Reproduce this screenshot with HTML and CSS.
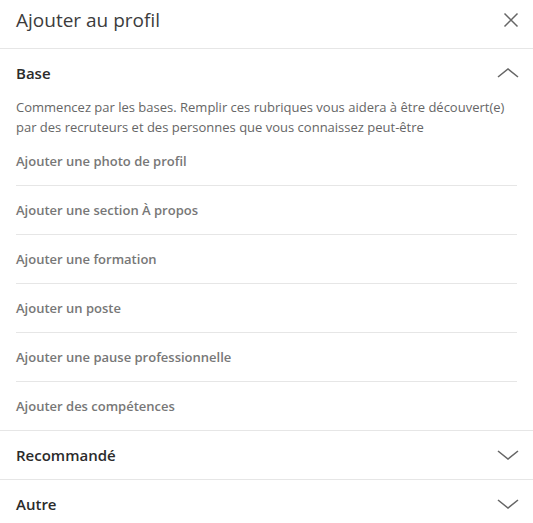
FILE: index.html
```html
<!DOCTYPE html>
<html lang="fr">
<head>
<meta charset="utf-8">
<link rel="stylesheet" href="styles.css">
</head>
<body>
<div class="modal">
  <header class="modal-header">
    <h2 class="modal-title">Ajouter au profil</h2>
    <button class="close" aria-label="Fermer">
      <svg width="16" height="16" viewBox="0 0 16 16"><path d="M1.5 1.5 L14.5 14.5 M14.5 1.5 L1.5 14.5" stroke="#666" stroke-width="1.5" fill="none"/></svg>
    </button>
  </header>

  <section class="section">
    <div class="section-head">
      <h3>Base</h3>
      <svg class="chev" width="24" height="24" viewBox="0 0 24 24"><path d="M3 16 L13 8 L23 16" stroke="#666" stroke-width="1.6" fill="none"/></svg>
    </div>
    <p class="desc">Commencez par les bases. Remplir ces rubriques vous aidera à être découvert(e) par des recruteurs et des personnes que vous connaissez peut-être</p>
    <ul class="items">
      <li>Ajouter une photo de profil</li>
      <li>Ajouter une section À propos</li>
      <li>Ajouter une formation</li>
      <li>Ajouter un poste</li>
      <li>Ajouter une pause professionnelle</li>
      <li>Ajouter des compétences</li>
    </ul>
  </section>

  <section class="section">
    <div class="section-head">
      <h3>Recommandé</h3>
      <svg class="chev" width="24" height="24" viewBox="0 0 24 24"><path d="M3 8 L13 16 L23 8" stroke="#666" stroke-width="1.6" fill="none"/></svg>
    </div>
  </section>

  <section class="section">
    <div class="section-head">
      <h3>Autre</h3>
      <svg class="chev" width="24" height="24" viewBox="0 0 24 24"><path d="M3 8 L13 16 L23 8" stroke="#666" stroke-width="1.6" fill="none"/></svg>
    </div>
  </section>
</div>
</body>
</html>
```

FILE: styles.css
```css
* { box-sizing: border-box; }
html, body { margin: 0; padding: 0; background: #fff; }
body {
  font-family: "Open Sans", "Noto Sans", Arial, sans-serif;
  color: #666;
}
.modal { width: 533px; }
.modal-header {
  height: 49px;
  display: flex;
  align-items: flex-start;
  justify-content: space-between;
  padding: 6px 14px 0 16px;
  border-bottom: 1px solid #e6e6e6;
}
.modal-title {
  margin: 0;
  font-size: 19px;
  font-weight: 400;
  line-height: 28px;
  color: #3c3c3c;
}
.close {
  border: 0;
  background: none;
  padding: 0;
  margin-top: 6px;
  width: 16px;
  height: 16px;
  display: flex;
}
.section { border-bottom: 1px solid #e6e6e6; }
.section-head {
  height: 48px;
  display: flex;
  align-items: center;
  justify-content: space-between;
  padding: 0 16px;
}
.section-head h3 {
  margin: 0;
  font-size: 15px;
  font-weight: 600;
  color: #2b2b2b;
}
.chev { display: block; margin-right: -2px; }
.desc {
  margin: 0;
  padding: 0 16px;
  font-size: 13px;
  line-height: 20px;
  color: #666;
}
.items {
  list-style: none;
  margin: 0;
  padding: 0 16px;
}
.items li {
  height: 49px;
  display: flex;
  align-items: center;
  font-size: 13px;
  font-weight: 600;
  color: #777;
  border-bottom: 1px solid #e6e6e6;
}
.items li:last-child { border-bottom: 0; height: 48px; }
```
